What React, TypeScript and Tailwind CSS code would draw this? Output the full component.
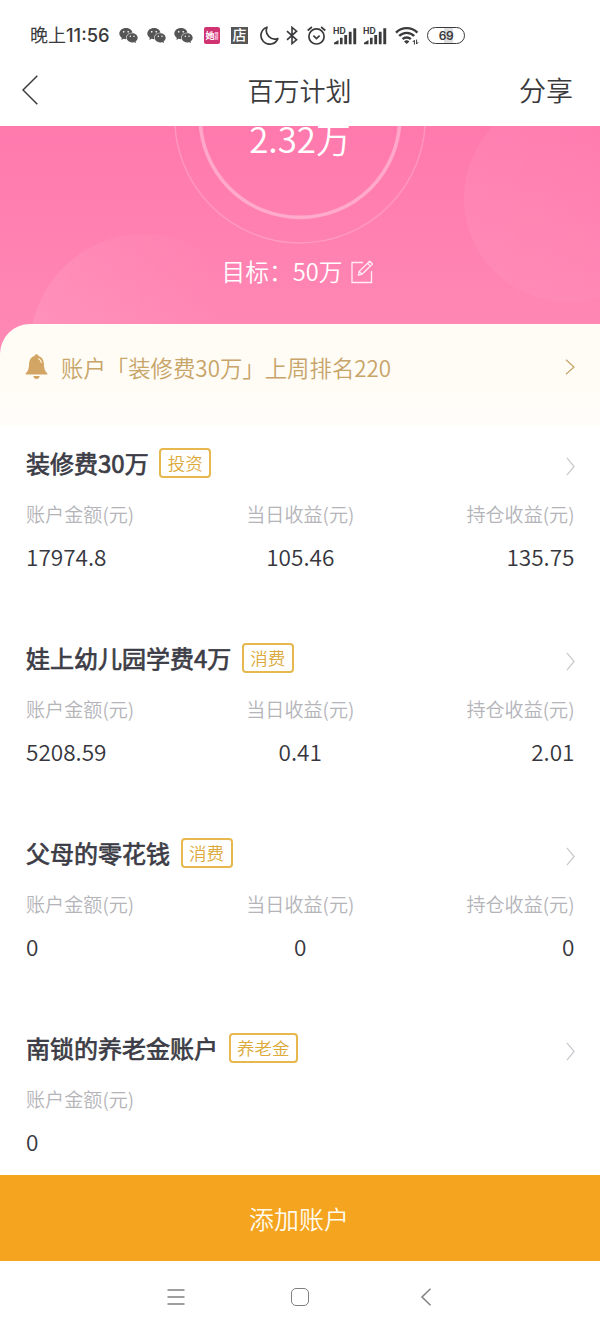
import React from 'react';
import { AiFillWechat } from 'react-icons/ai';

interface Stat {
  label: string;
  value: string;
}

interface Account {
  name: string;
  tag: string;
  stats: Stat[];
}

const accounts: Account[] = [
  {
    name: '装修费30万',
    tag: '投资',
    stats: [
      { label: '账户金额(元)', value: '17974.8' },
      { label: '当日收益(元)', value: '105.46' },
      { label: '持仓收益(元)', value: '135.75' },
    ],
  },
  {
    name: '娃上幼儿园学费4万',
    tag: '消费',
    stats: [
      { label: '账户金额(元)', value: '5208.59' },
      { label: '当日收益(元)', value: '0.41' },
      { label: '持仓收益(元)', value: '2.01' },
    ],
  },
  {
    name: '父母的零花钱',
    tag: '消费',
    stats: [
      { label: '账户金额(元)', value: '0' },
      { label: '当日收益(元)', value: '0' },
      { label: '持仓收益(元)', value: '0' },
    ],
  },
  {
    name: '南锁的养老金账户',
    tag: '养老金',
    stats: [{ label: '账户金额(元)', value: '0' }],
  },
];

const statAlign = ['text-left', 'text-center', 'text-right'];

const Signal: React.FC = () => (
  <svg className="w-6 h-[18px]" viewBox="0 0 24 18" fill="#3a3a3c">
    <text x="0" y="6.6" fontSize="8.6" fontWeight="700" fontFamily="Inter, sans-serif">HD</text>
    <path d="M1 17.3v-1.6l4.5-2.6v4.2zM7 10.8h2.6v6.5H7zM11.3 8h2.8v9.3h-2.8zM15.8 4.8h2.8v12.5h-2.8zM20.3 1.2h2.9v16.1h-2.9z" />
  </svg>
);

const Chevron: React.FC<{ className: string }> = ({ className }) => (
  <svg className={className} viewBox="0 0 10 20" preserveAspectRatio="none" fill="none" stroke="currentColor">
    <path d="M1 1l8 9-8 9" strokeWidth="1.2" vectorEffect="non-scaling-stroke" />
  </svg>
);

const StatusBar: React.FC = () => (
  <div className="h-[54px] pt-[17px] pl-[30px] flex items-center text-[#3a3a3c] shrink-0">
    <div className="w-[88px] flex items-center leading-none whitespace-nowrap">
      <span className="text-[18px] leading-[17px] pb-px">晚上</span>
      <span className="font-[Inter] font-medium text-[18.3px]">11:56</span>
    </div>
    <div className="flex gap-[6.5px] text-[#555]">
      <AiFillWechat className="w-[21px] h-[21px]" />
      <AiFillWechat className="w-[21px] h-[21px]" />
      <AiFillWechat className="w-[21px] h-[21px]" />
    </div>
    <div className="ml-[10px] w-[16px] h-[17px] rounded-[2px] bg-[#cf3371] text-white flex items-center justify-center leading-none font-bold">
      <span className="text-[9px]">她</span>
      <span className="w-[4px] text-[4px] leading-[4px] text-pink-200">理财</span>
    </div>
    <div className="ml-[11px] w-[17px] h-[17px] bg-[#555] text-white text-[14px] leading-[15px] text-center font-medium">店</div>
    <svg className="ml-[12px] w-[19px] h-[19px]" viewBox="0 0 19 19" fill="none" stroke="currentColor" strokeWidth="1.7" strokeLinejoin="round">
      <path d="M7 1.2A8.7 8.7 0 1 0 17.8 12.6 8.6 8.6 0 0 1 7 1.2z" />
    </svg>
    <svg className="ml-[7px] w-[12px] h-[19px]" viewBox="0 0 12 19" fill="none" stroke="currentColor" strokeWidth="1.6">
      <path d="M1 5.2l9.6 8.6L6 17.6V1.4l4.6 3.8L1 13.8" />
    </svg>
    <svg className="ml-[9px] w-[19px] h-[19px]" viewBox="0 0 19 19" fill="none" stroke="currentColor" strokeWidth="1.7">
      <circle cx="9.5" cy="10.4" r="7.6" />
      <path d="M6.4 9.6l3.1 2.9 3.1-2.9M.7 4.5L4.9 1M18.3 4.5L14.1 1" />
    </svg>
    <div className="ml-[7px] flex gap-[6px]">
      <Signal />
      <Signal />
    </div>
    <svg className="ml-[8px] w-6 h-[19px]" viewBox="0 0 24 19" fill="none" stroke="currentColor" strokeWidth="2.4">
      <path d="M1 6.6a15 15 0 0 1 21.4 0M4.2 10a10.5 10.5 0 0 1 15 0M7.6 13.2a5.8 5.8 0 0 1 8.2 0" />
      <path d="M9 15.4a4 4 0 0 1 5.4 0L11.7 18z" fill="currentColor" stroke="none" />
      <path d="M19.4 18.6v-4.4l-1.6 1.8M21.6 13.6V18l1.6-1.8" strokeWidth="1" />
    </svg>
    <div className="ml-[8px] w-[38px] h-[17px] rounded-full border-[1.5px] border-[#3a3a3c] bg-[linear-gradient(90deg,#fff_0_45%,#dedede_45%_70%,#fff_70%)] font-[Inter] font-semibold text-[12px] leading-[15px] tracking-[-0.5px] text-center">
      69
    </div>
  </div>
);

const Header: React.FC = () => (
  <header className="h-[72px] pl-[22px] pr-[27px] flex items-center justify-between text-[#3a3a3c] shrink-0">
    <div className="w-[58px]">
      <svg className="w-4 h-[30px]" viewBox="0 0 16 30" fill="none" stroke="currentColor" strokeWidth="1.5">
        <path d="M15.3.8L1 15l14.3 14.2" />
      </svg>
    </div>
    <h1 className="text-[26px] leading-none font-[350]">百万计划</h1>
    <button className="pb-[2px] text-[27px] leading-none font-[350]">分享</button>
  </header>
);

const Hero: React.FC = () => (
  <section className="relative h-[198px] shrink-0 overflow-hidden bg-linear-to-b from-[#ff79ad] to-[#ff87b4] text-white">
    <svg className="absolute inset-0 w-full h-full" viewBox="0 0 600 198" fill="none">
      <defs>
        <linearGradient id="bubbleLeft" x1="0" y1="0.5" x2="1" y2="0.4">
          <stop offset="0" stopColor="#fff" stopOpacity=".09" />
          <stop offset=".85" stopColor="#fff" stopOpacity="0" />
        </linearGradient>
        <linearGradient id="bubbleRight" x1="0" y1="0.5" x2="1" y2="0.5">
          <stop offset="0" stopColor="#fff" stopOpacity=".055" />
          <stop offset="1" stopColor="#fff" stopOpacity="0.01" />
        </linearGradient>
      </defs>
      <circle cx="144" cy="222" r="114" fill="url(#bubbleLeft)" />
      <circle cx="568" cy="72" r="104" fill="url(#bubbleRight)" />
      <circle cx="300" cy="-8.4" r="99.8" stroke="#fff" strokeOpacity=".34" strokeWidth="3.6" />
      <circle cx="300" cy="-8.4" r="125.3" stroke="#fff" strokeOpacity=".2" strokeWidth="1.5" />
    </svg>
    <div className="relative flex flex-col items-center">
      <div className="h-[24px] text-[34.8px] leading-[24px] font-[350]">2.32万</div>
      <div className="mt-[109px] flex items-center h-[26px] pr-[4px]">
        <span className="text-[23.7px] leading-none font-[350]">目标：50万</span>
        <svg className="ml-[9px] w-[23px] h-[24px]" viewBox="0 0 23 24" fill="none" stroke="currentColor" strokeWidth="1.3" strokeOpacity=".85">
          <path d="M12 2.5H1v20h19.5V11" />
          <path d="M18.7 1.2l2.8 2.8L11 14.2l-3.6.9.8-3.7zM16.6 3.4l2.7 2.7M8.2 11.4l2.8 2.8" strokeLinejoin="round" />
        </svg>
      </div>
    </div>
  </section>
);

const Notice: React.FC = () => (
  <div className="bg-[#ff87b4] shrink-0">
    <div className="h-[102px] pt-[24px] pl-[25px] pr-[25px] flex items-start rounded-tl-[30px] bg-linear-to-b from-[#fffcf6] from-60% to-[#fffdfa] text-[#c7a468]">
      <svg className="mt-[6px] w-[23px] h-[26px]" viewBox="0 0 23 26" fill="#d3a564">
        <path d="M11.5.3c1.2 0 1.9.7 2 1.7 3.5 1 5.3 4 5.4 7.4.1 4.4.7 7.3 3.4 10 .3.5.1 1-.5 1H1.2c-.6 0-.8-.5-.5-1 2.7-2.7 3.3-5.6 3.4-10C4.2 6 6 3 9.5 2c.1-1 .8-1.7 2-1.7z" />
        <path d="M8.3 22h6.4c-.3 1.9-1.5 3-3.2 3s-2.9-1.1-3.2-3z" />
        <path d="M13.6 4.7c1.6.7 2.5 2 2.7 3.7" fill="none" stroke="#fff3dc" strokeWidth="1.2" strokeLinecap="round" />
      </svg>
      <span className="ml-[13px] flex-1 text-[22.4px] leading-[38px] font-[350]">账户「装修费30万」上周排名220</span>
      <Chevron className="mt-[11px] w-[10px] h-[16px]" />
    </div>
  </div>
);

const AccountRow: React.FC<{ account: Account }> = ({ account }) => (
  <div className="h-[195px] pl-[26px] pr-[25.5px] pt-[22px] shrink-0">
    <div className="flex items-center h-[30px]">
      <h2 className="text-[24px] leading-none font-normal text-[#3c3c46] [-webkit-text-stroke:0.7px_#3c3c46]">{account.name}</h2>
      <span className="ml-[10.5px] h-[30px] px-[6.5px] border-2 border-[#e6b84d] rounded-[4px] text-[17.5px] leading-[25px] font-[350] text-[#dca93a]">
        {account.tag}
      </span>
      <Chevron className="ml-auto mt-[6px] w-[9px] h-[19px] text-[#c8c8cc]" />
    </div>
    <div className="mt-[21px] grid grid-cols-3">
      {account.stats.map((stat, i) => (
        <div key={stat.label} className={statAlign[i]}>
          <div className="text-[19.1px] leading-[30px] font-[350] text-[#b4b4b9]">{stat.label}</div>
          <div className="mt-[13px] text-[22.6px] leading-[30px] font-[350] text-[#36363e]">{stat.value}</div>
        </div>
      ))}
    </div>
  </div>
);

const NavBar: React.FC = () => (
  <nav className="h-[72px] shrink-0 flex justify-center items-center text-[#808080]">
    <svg className="w-[18px] h-[18px]" viewBox="0 0 18 18" stroke="currentColor" strokeWidth="1.5">
      <path d="M.5 2h17M.5 9h17M.5 16h17" />
    </svg>
    <div className="mx-[106px] w-[18px] h-[18px] rounded-[5px] border-[1.5px] border-[#808080]"></div>
    <svg className="w-[18px] h-[18px]" viewBox="0 0 18 18" fill="none" stroke="currentColor" strokeWidth="1.5">
      <path d="M15.5.8L7 9l8.5 8.2" />
    </svg>
  </nav>
);

const App: React.FC = () => (
  <div className="w-[600px] h-[1333px] flex flex-col overflow-hidden bg-white font-['Noto_Sans_CJK_SC',sans-serif]">
    <StatusBar />
    <Header />
    <Hero />
    <Notice />
    <main className="flex-1 min-h-0 overflow-hidden">
      {accounts.map((account) => (
        <AccountRow key={account.name} account={account} />
      ))}
    </main>
    <button className="h-[86px] pr-[2px] shrink-0 bg-[#f5a41f] text-[25px] leading-none font-[350] text-[#fffbee]">添加账户</button>
    <NavBar />
  </div>
);

export default App;
